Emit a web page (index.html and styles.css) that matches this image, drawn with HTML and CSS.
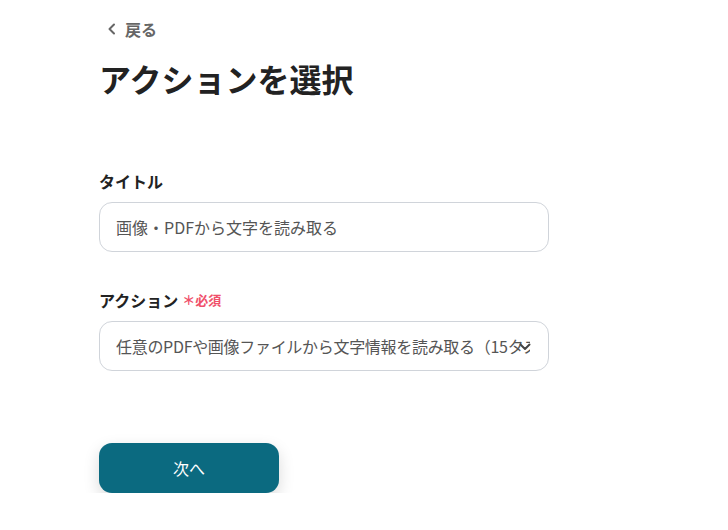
FILE: index.html
```html
<!DOCTYPE html>
<html lang="ja">
<head>
<meta charset="utf-8">
<link rel="stylesheet" href="styles.css">
</head>
<body>
<main class="page">
  <a class="back" href="#">
    <svg class="back-icon" width="10" height="12" viewBox="0 0 10 12"><path d="M7 1.5 L2.5 6 L7 10.5" fill="none" stroke="#666" stroke-width="2" stroke-linecap="round" stroke-linejoin="round"/></svg>
    <span>戻る</span>
  </a>
  <h1 class="title">アクションを選択</h1>

  <div class="field field-first">
    <label class="label">タイトル</label>
    <div class="input">画像・PDFから文字を読み取る</div>
  </div>

  <div class="field">
    <label class="label">アクション<span class="req"><span class="star">＊</span>必須</span></label>
    <div class="select">
      <div class="select-text">任意のPDFや画像ファイルから文字情報を読み取る（15タスク）</div>
      <svg class="chev" width="12" height="8" viewBox="0 0 12 8"><path d="M1.5 1.5 L6 6 L10.5 1.5" fill="none" stroke="#444" stroke-width="2" stroke-linecap="round" stroke-linejoin="round"/></svg>
    </div>
  </div>

  <button class="next">次へ</button>
</main>
</body>
</html>
```
FILE: styles.css
```css
* { box-sizing: border-box; }
body {
  margin: 0;
  background: #fff;
  font-family: "Noto Sans CJK JP", "Noto Sans", sans-serif;
  color: #222;
}
.page {
  padding: 17px 0 0 99px;
  display: flex;
  flex-direction: column;
  align-items: flex-start;
}
.back {
  display: flex;
  align-items: center;
  gap: 8px;
  padding-left: 8px;
  height: 24px;
  color: #666;
  text-decoration: none;
  font-size: 16px;
  font-weight: 700;
}
.title {
  margin: 13px 0 0;
  font-size: 32px;
  line-height: 48px;
  font-weight: 700;
  color: #222;
}
.field { display: flex; flex-direction: column; gap: 9px; margin-top: 36px; }
.field-first { margin-top: 67px; }
.label {
  font-size: 16px;
  line-height: 24px;
  font-weight: 700;
  color: #222;
  display: flex;
  align-items: center;
}
.req {
  color: #f0506a;
  font-size: 13px;
  margin-left: 4px;
  display: flex;
  align-items: center;
}
.star { font-size: 13px; }
.input, .select {
  width: 450px;
  height: 50px;
  border: 1px solid #d0d4da;
  border-radius: 13px;
  padding: 0 16px;
  display: flex;
  align-items: center;
  font-size: 16px;
  color: #555;
}
.select { position: relative; padding-right: 18px; }
.select-text { white-space: nowrap; overflow: hidden; letter-spacing: -0.3px; }
.chev { position: absolute; right: 17px; top: 21px; z-index: 1; }
.next {
  margin-top: 72px;
  width: 180px;
  height: 50px;
  border: none;
  border-radius: 13px;
  background: #0b6a80;
  color: #fff;
  font-family: inherit;
  font-size: 16px;
  box-shadow: 0 6px 16px rgba(0,0,0,0.15);
}
```
